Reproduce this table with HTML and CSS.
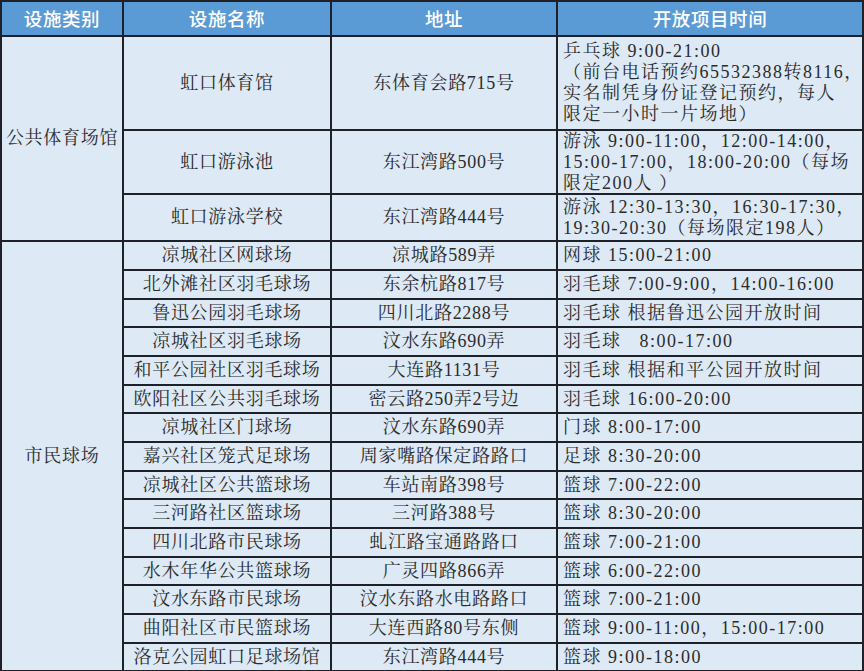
FILE: index.html
```html
<!DOCTYPE html>
<html lang="zh-CN">
<head>
<meta charset="utf-8">
<title>虹口区公共体育设施开放时间</title>
<link rel="stylesheet" href="styles.css">
</head>
<body>
<table class="sheet">
  <colgroup>
    <col class="c1"><col class="c2"><col class="c3"><col class="c4">
  </colgroup>
  <thead>
    <tr class="head">
      <th>设施类别</th><th>设施名称</th><th>地址</th><th>开放项目时间</th>
    </tr>
  </thead>
  <tbody>
    <tr class="r-big">
      <td class="cat" rowspan="3">公共体育场馆</td>
      <td>虹口体育馆</td>
      <td>东体育会路715号</td>
      <td class="time">乒乓球 9:00-21:00<br>（前台电话预约65532388转8116，<br>实名制凭身份证登记预约，每人<br>限定一小时一片场地）</td>
    </tr>
    <tr class="r-mid">
      <td>虹口游泳池</td>
      <td>东江湾路500号</td>
      <td class="time">游泳 9:00-11:00，12:00-14:00，<br>15:00-17:00，18:00-20:00（每场<br>限定200人 ）</td>
    </tr>
    <tr class="r-two">
      <td>虹口游泳学校</td>
      <td>东江湾路444号</td>
      <td class="time">游泳 12:30-13:30，16:30-17:30，<br>19:30-20:30（每场限定198人）</td>
    </tr>
    <tr class="r">
      <td class="cat" rowspan="15">市民球场</td>
      <td>凉城社区网球场</td><td>凉城路589弄</td><td class="time">网球 15:00-21:00</td>
    </tr>
    <tr class="r"><td>北外滩社区羽毛球场</td><td>东余杭路817号</td><td class="time">羽毛球 7:00-9:00，14:00-16:00</td></tr>
    <tr class="r"><td>鲁迅公园羽毛球场</td><td>四川北路2288号</td><td class="time">羽毛球 根据鲁迅公园开放时间</td></tr>
    <tr class="r"><td>凉城社区羽毛球场</td><td>汶水东路690弄</td><td class="time">羽毛球&nbsp;&nbsp;&nbsp;8:00-17:00</td></tr>
    <tr class="r"><td>和平公园社区羽毛球场</td><td>大连路1131号</td><td class="time">羽毛球 根据和平公园开放时间</td></tr>
    <tr class="r"><td>欧阳社区公共羽毛球场</td><td>密云路250弄2号边</td><td class="time">羽毛球 16:00-20:00</td></tr>
    <tr class="r"><td>凉城社区门球场</td><td>汶水东路690弄</td><td class="time">门球 8:00-17:00</td></tr>
    <tr class="r"><td>嘉兴社区笼式足球场</td><td>周家嘴路保定路路口</td><td class="time">足球 8:30-20:00</td></tr>
    <tr class="r"><td>凉城社区公共篮球场</td><td>车站南路398号</td><td class="time">篮球 7:00-22:00</td></tr>
    <tr class="r"><td>三河路社区篮球场</td><td>三河路388号</td><td class="time">篮球 8:30-20:00</td></tr>
    <tr class="r"><td>四川北路市民球场</td><td>虬江路宝通路路口</td><td class="time">篮球 7:00-21:00</td></tr>
    <tr class="r"><td>水木年华公共篮球场</td><td>广灵四路866弄</td><td class="time">篮球 6:00-22:00</td></tr>
    <tr class="r"><td>汶水东路市民球场</td><td>汶水东路水电路路口</td><td class="time">篮球 7:00-21:00</td></tr>
    <tr class="r"><td>曲阳社区市民篮球场</td><td>大连西路80号东侧</td><td class="time">篮球 9:00-11:00，15:00-17:00</td></tr>
    <tr class="r"><td>洛克公园虹口足球场馆</td><td>东江湾路444号</td><td class="time">篮球 9:00-18:00</td></tr>
  </tbody>
</table>
</body>
</html>
```
FILE: styles.css
```css
html, body {
  margin: 0;
  padding: 0;
  background: #ffffff;
}

.sheet {
  border-collapse: collapse;
  table-layout: fixed;
  width: 862px;
  font-family: "Liberation Serif", "Noto Serif CJK SC", "Noto Sans CJK SC", serif;
  font-size: 18px;
  letter-spacing: 0.7px;
  line-height: 20.8px;
  color: #2b2b2b;
}

.c1 { width: 122px; }
.c2 { width: 208px; }
.c3 { width: 226px; }
.c4 { width: 306px; }

.sheet th,
.sheet td {
  border: 2px solid #1e2228;
  padding: 0 4px;
  text-align: center;
  vertical-align: middle;
  white-space: nowrap;
  overflow: hidden;
}

.sheet th {
  background: #5b9bd5;
  color: #ffffff;
  font-family: "Noto Sans CJK SC", "Liberation Sans", sans-serif;
  font-weight: 500;
  font-size: 18.5px;
  letter-spacing: 0.6px;
}

.sheet td {
  background: #dde9f5;
}

.sheet td.time {
  text-align: left;
  padding-left: 5px;
  letter-spacing: 1.5px;
}

.sheet td.cat {
  padding: 0;
}

.head { height: 35px; }
.r-big { height: 94px; }
.r-mid { height: 62px; }
.r-two { height: 47px; }
.r { height: 28.67px; }
```
